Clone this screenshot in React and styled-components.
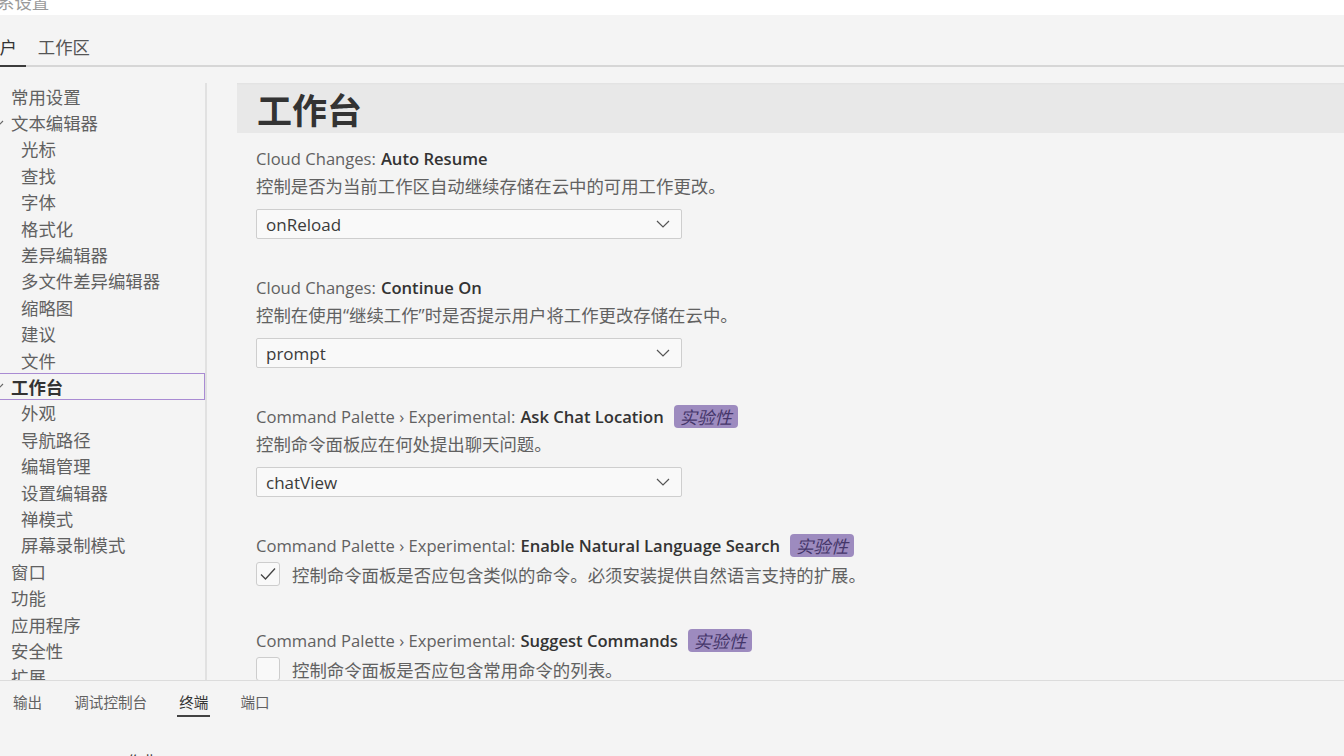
import styled, { createGlobalStyle } from "styled-components";

const GlobalStyle = createGlobalStyle`
  html, body {
    margin: 0;
    padding: 0;
    background: #f4f4f4;
  }
  * {
    box-sizing: border-box;
  }
  body {
    font-family: "Open Sans", "Noto Sans CJK SC", sans-serif;
    color: #616161;
  }
`;

const Page = styled.div`
  width: 1344px;
  height: 756px;
  overflow: hidden;
  display: flex;
  flex-direction: column;
  background: #f4f4f4;
`;

const TitleStrip = styled.div`
  height: 15px;
  flex: none;
  background: #fff;
  overflow: hidden;
  color: #9a9a9a;
  font-size: 17.4px;
  line-height: 20px;
`;

const TitleText = styled.div`
  margin-top: -8px;
  margin-left: -3px;
`;

const TabBar = styled.div`
  height: 52px;
  flex: none;
  display: flex;
  gap: 3px;
  border-bottom: 2px solid #d6d6d6;
`;

const Tab = styled.div`
  display: flex;
  align-items: flex-end;
  padding: 0 9px 6px;
  font-size: 17.4px;
  line-height: 24px;
  color: ${(p) => (p.active ? "#333" : "#555")};
  border-bottom: 2px solid ${(p) => (p.active ? "#3c3c3c" : "transparent")};
  margin-bottom: -2px;
  margin-left: ${(p) => (p.first ? "-27px" : "0")};
`;

const Body = styled.div`
  flex: 1;
  min-height: 0;
  display: flex;
  overflow: hidden;
`;

const Sidebar = styled.nav`
  width: 207px;
  flex: none;
  margin-top: 16px;
  border-right: 2px solid #e1e1e1;
  overflow: hidden;
`;

const NavRow = styled.div`
  height: 26.4px;
  display: flex;
  align-items: center;
  padding-left: ${(p) => p.indent}px;
  font-size: 17.4px;
  white-space: nowrap;
  color: ${(p) => (p.selected ? "#333" : "#616161")};
  font-weight: ${(p) => (p.selected ? 700 : 400)};
  border: 1px solid ${(p) => (p.selected ? "#a98bd3" : "transparent")};
  margin-left: -1px;
`;

const Chevron = styled.svg`
  width: 12px;
  height: 12px;
  margin-left: -18px;
  margin-right: 6px;
  flex: none;
`;

const Content = styled.main`
  flex: 1;
  min-width: 0;
  padding: 16px 0 0 30px;
  overflow: hidden;
`;

const SectionHeader = styled.h1`
  margin: 0;
  height: 50px;
  display: flex;
  align-items: center;
  padding-left: 20px;
  background: #e8e8e8;
  box-shadow: inset 0 2px 2px -1px #e1e1e1;
  font-size: 35px;
  font-weight: 700;
  color: #333;
  font-family: "Noto Sans CJK SC", sans-serif;
`;

const SettingList = styled.div`
  padding: 13px 0 0 19px;
`;

const Setting = styled.div`
  padding-bottom: ${(p) => (p.kind === "check" ? 42 : 36)}px;
`;

const SettingTitle = styled.div`
  display: flex;
  align-items: center;
  height: 24px;
  font-size: 16.6px;
  white-space: nowrap;
  color: #616161;
`;

const Strong = styled.span`
  color: #333;
  font-weight: 600;
  margin-left: 5px;
`;

const Badge = styled.span`
  margin-left: 10px;
  padding: 0 6px;
  height: 23px;
  display: inline-flex;
  align-items: center;
  border-radius: 4px;
  background: #9d8bbf;
  color: #45366a;
  font-style: italic;
  font-size: 17.4px;
`;

const Description = styled.div`
  margin-top: 4px;
  height: 24px;
  line-height: 24px;
  font-size: 17.4px;
  color: #616161;
  white-space: nowrap;
`;

const Select = styled.div`
  margin-top: 11px;
  width: 426px;
  height: 30px;
  display: flex;
  align-items: center;
  justify-content: space-between;
  padding: 0 11px 0 9px;
  border: 1px solid #cecece;
  border-radius: 2px;
  background: #f9f9f9;
  font-size: 17px;
  color: #3b3b3b;
`;

const CheckRow = styled.div`
  margin-top: 5px;
  height: 24px;
  display: flex;
  align-items: center;
  gap: 12px;
  font-size: 17.4px;
  color: #616161;
  white-space: nowrap;
`;

const CheckBox = styled.div`
  width: 24px;
  height: 24px;
  flex: none;
  border: 1px solid #cdcdcd;
  border-radius: 3px;
  background: #f9f9f9;
  display: flex;
  align-items: center;
  justify-content: center;
`;

const Panel = styled.div`
  height: 76px;
  flex: none;
  border-top: 1px solid #dcdcdc;
  overflow: hidden;
`;

const PanelTabs = styled.div`
  display: flex;
  gap: 28px;
  padding: 10px 0 0 11px;
  height: 38px;
`;

const PanelTab = styled.div`
  padding: 0 2px;
  height: 26px;
  line-height: 22px;
  font-size: 14.6px;
  color: ${(p) => (p.active ? "#333" : "#616161")};
  border-bottom: 2px solid ${(p) => (p.active ? "#424242" : "transparent")};
`;

const Terminal = styled.div`
  margin-top: 32px;
  padding-left: 4px;
  font-size: 15px;
  line-height: 20px;
  color: #333;
  white-space: nowrap;
`;

const nav = [
  { label: "常用设置", indent: 11 },
  { label: "文本编辑器", indent: 11, open: true },
  { label: "光标", indent: 21 },
  { label: "查找", indent: 21 },
  { label: "字体", indent: 21 },
  { label: "格式化", indent: 21 },
  { label: "差异编辑器", indent: 21 },
  { label: "多文件差异编辑器", indent: 21 },
  { label: "缩略图", indent: 21 },
  { label: "建议", indent: 21 },
  { label: "文件", indent: 21 },
  { label: "工作台", indent: 11, open: true, selected: true },
  { label: "外观", indent: 21 },
  { label: "导航路径", indent: 21 },
  { label: "编辑管理", indent: 21 },
  { label: "设置编辑器", indent: 21 },
  { label: "禅模式", indent: 21 },
  { label: "屏幕录制模式", indent: 21 },
  { label: "窗口", indent: 11 },
  { label: "功能", indent: 11 },
  { label: "应用程序", indent: 11 },
  { label: "安全性", indent: 11 },
  { label: "扩展", indent: 11 },
];

const settings = [
  {
    prefix: "Cloud Changes:",
    name: "Auto Resume",
    desc: "控制是否为当前工作区自动继续存储在云中的可用工作更改。",
    value: "onReload",
  },
  {
    prefix: "Cloud Changes:",
    name: "Continue On",
    desc: "控制在使用“继续工作”时是否提示用户将工作更改存储在云中。",
    value: "prompt",
  },
  {
    prefix: "Command Palette › Experimental:",
    name: "Ask Chat Location",
    badge: true,
    desc: "控制命令面板应在何处提出聊天问题。",
    value: "chatView",
  },
  {
    prefix: "Command Palette › Experimental:",
    name: "Enable Natural Language Search",
    badge: true,
    desc: "控制命令面板是否应包含类似的命令。必须安装提供自然语言支持的扩展。",
    checked: true,
  },
  {
    prefix: "Command Palette › Experimental:",
    name: "Suggest Commands",
    badge: true,
    desc: "控制命令面板是否应包含常用命令的列表。",
    checked: false,
  },
];

function DownChevron() {
  return (
    <svg width="14" height="8" viewBox="0 0 14 8" fill="none">
      <path d="M1 1l6 6 6-6" stroke="#555" strokeWidth="1.2" />
    </svg>
  );
}

function Check() {
  return (
    <svg width="18" height="16" viewBox="0 0 18 16" fill="none">
      <path d="M2 8.5l4.5 4.5L16 2.5" stroke="#444" strokeWidth="1.3" />
    </svg>
  );
}

export default function App() {
  return (
    <Page>
      <GlobalStyle />
      <TitleStrip>
        <TitleText>系设置</TitleText>
      </TitleStrip>
      <TabBar>
        <Tab first active>
          用户
        </Tab>
        <Tab>工作区</Tab>
      </TabBar>
      <Body>
        <Sidebar>
          {nav.map((item) => (
            <NavRow key={item.label} indent={item.indent} selected={item.selected}>
              {item.open && (
                <Chevron viewBox="0 0 12 12" fill="none">
                  <path d="M2 4l4 4 4-4" stroke="#666" strokeWidth="1.2" />
                </Chevron>
              )}
              {item.label}
            </NavRow>
          ))}
        </Sidebar>
        <Content>
          <SectionHeader>工作台</SectionHeader>
          <SettingList>
            {settings.map((s) => (
              <Setting key={s.name} kind={s.value ? "select" : "check"}>
                <SettingTitle>
                  {s.prefix}
                  <Strong>{s.name}</Strong>
                  {s.badge && <Badge>实验性</Badge>}
                </SettingTitle>
                {s.value ? (
                  <>
                    <Description>{s.desc}</Description>
                    <Select>
                      {s.value}
                      <DownChevron />
                    </Select>
                  </>
                ) : (
                  <CheckRow>
                    <CheckBox>{s.checked && <Check />}</CheckBox>
                    {s.desc}
                  </CheckRow>
                )}
              </Setting>
            ))}
          </SettingList>
        </Content>
      </Body>
      <Panel>
        <PanelTabs>
          <PanelTab>输出</PanelTab>
          <PanelTab>调试控制台</PanelTab>
          <PanelTab active>终端</PanelTab>
          <PanelTab>端口</PanelTab>
        </PanelTabs>
        <Terminal>PS C:\Users\dev&gt; 作业</Terminal>
      </Panel>
    </Page>
  );
}
